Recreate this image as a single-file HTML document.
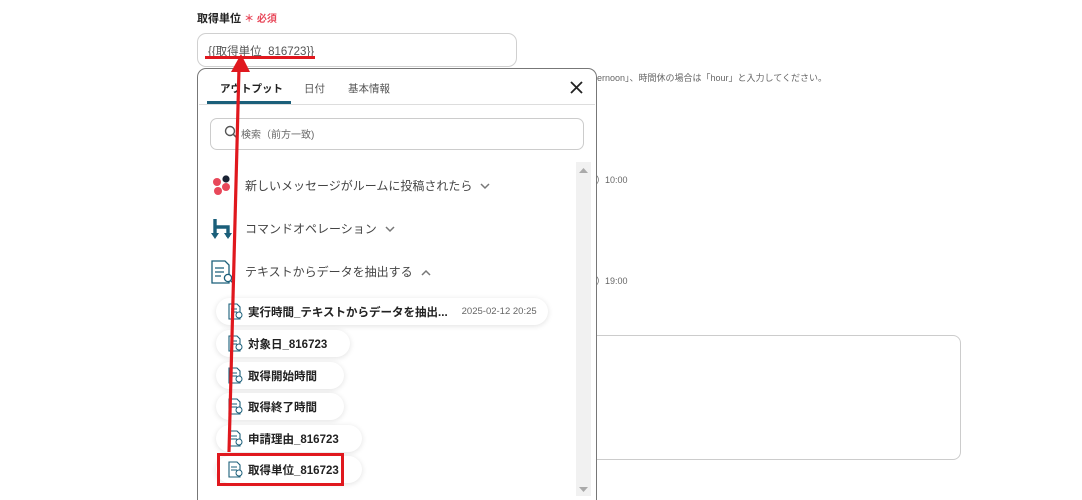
<!DOCTYPE html>
<html><head><meta charset="utf-8"><style>
*{margin:0;padding:0;box-sizing:border-box}
html,body{width:1082px;height:500px;overflow:hidden}
body{background:#fff;font-family:"Liberation Sans","Noto Sans CJK JP",sans-serif;position:relative;color:#333}
.a{position:absolute;white-space:nowrap}
.chip{position:absolute;left:216px;height:27px;background:#fff;border-radius:14px;box-shadow:0 1px 6px rgba(0,0,0,.12);font-size:11.5px;font-weight:bold;color:#222;display:flex;align-items:center;padding-left:12px}
.chip svg{margin-right:4px}
.chev{display:inline-block;margin-left:8px;vertical-align:middle}
</style></head><body>
<div class="a" style="left:197px;top:10px;font-size:11px;font-weight:bold;color:#222">取得単位 <span style="color:#e8485a;font-size:10px">＊ 必須</span></div>
<div class="a" style="left:197px;top:33px;width:320px;height:34px;border:1px solid #d0d0d0;border-radius:9px"></div>
<div class="a" style="left:208px;top:43px;font-size:11.5px;color:#555">{{取得単位_816723}}</div>
<div class="a" style="left:597px;top:71px;font-size:9px;color:#666">ernoon」、時間休の場合は「hour」と入力してください。</div>
<div class="a" style="left:596px;top:173px;font-size:9px;color:#666">）10:00</div>
<div class="a" style="left:596px;top:274px;font-size:9px;color:#666">）19:00</div>
<div class="a" style="left:585px;top:335px;width:376px;height:125px;border:1px solid #ccc;border-radius:8px"></div>

<div class="a" style="left:197px;top:68px;width:400px;height:432px;border:1.5px solid #777;border-bottom:none;border-radius:9px 9px 0 0;background:#fff"></div>
<div class="a" style="left:220px;top:81px;font-size:10.5px;font-weight:bold;color:#222">アウトプット</div>
<div class="a" style="left:304px;top:81px;font-size:10.5px;color:#555">日付</div>
<div class="a" style="left:348px;top:81px;font-size:10.5px;color:#555">基本情報</div>
<div class="a" style="left:207px;top:101px;width:84px;height:3px;background:#1b5f7a"></div>
<div class="a" style="left:199px;top:104px;width:396px;height:1px;background:#ddd"></div>
<svg class="a" style="left:570px;top:81px" width="13" height="13"><path d="M1 1L12 12M12 1L1 12" stroke="#222" stroke-width="1.8"/></svg>
<div class="a" style="left:210px;top:118px;width:374px;height:32px;border:1px solid #ccc;border-radius:7px"></div>
<svg class="a" style="left:224px;top:125px" width="14" height="14"><circle cx="6" cy="6" r="4.5" stroke="#555" stroke-width="1.4" fill="none"/><path d="M9.3 9.3L13 13" stroke="#555" stroke-width="1.5"/></svg>
<div class="a" style="left:241px;top:126px;font-size:10px;color:#666">検索（前方一致)</div>
<div class="a" style="left:576px;top:162px;width:15px;height:334px;background:#f1f1f1"></div>
<svg class="a" style="left:579px;top:168px" width="9" height="6"><path d="M0 5L4.5 0L9 5Z" fill="#aaa"/></svg>
<svg class="a" style="left:579px;top:487px" width="9" height="6"><path d="M0 0L4.5 5L9 0Z" fill="#aaa"/></svg>

<svg class="a" style="left:211px;top:174px" width="22" height="22"><circle cx="15" cy="5" r="3.6" fill="#1a2233"/><circle cx="6" cy="8" r="4" fill="#e8485a"/><circle cx="15" cy="13" r="4" fill="#e8485a"/><circle cx="7" cy="17" r="4" fill="#e8485a"/></svg>
<div class="a" style="left:245px;top:177px;font-size:12px;color:#444">新しいメッセージがルームに投稿されたら<svg class="chev" width="10" height="7"><path d="M1 1L5 5L9 1" stroke="#777" stroke-width="1.5" fill="none"/></svg></div>
<svg class="a" style="left:211px;top:217px" width="24" height="24"><path d="M4 2V18M4 10H17V20" stroke="#1b5f7a" stroke-width="3.4" fill="none"/><path d="M0 16H8L4 22Z M13 16H21L17 22Z" fill="#1b5f7a"/></svg>
<div class="a" style="left:245px;top:220px;font-size:12px;color:#444">コマンドオペレーション<svg class="chev" width="10" height="7"><path d="M1 1L5 5L9 1" stroke="#777" stroke-width="1.5" fill="none"/></svg></div>
<svg class="a" style="left:211px;top:260px" width="24" height="25"><path d="M1 1H14L18 5V23H1Z" stroke="#1b5f7a" stroke-width="1.3" fill="none"/><path d="M4 8H13M4 12H13M4 16H10" stroke="#1b5f7a" stroke-width="1.3"/><circle cx="17" cy="18" r="3.6" stroke="#1b5f7a" stroke-width="1.3" fill="#fff"/><path d="M19.5 20.5L23 24" stroke="#1b5f7a" stroke-width="1.4"/></svg>
<div class="a" style="left:245px;top:263px;font-size:12px;color:#444">テキストからデータを抽出する<svg class="chev" width="10" height="7"><path d="M1 6L5 2L9 6" stroke="#777" stroke-width="1.5" fill="none"/></svg></div>

<div class="chip" style="top:298px;width:332px"><svg width="16" height="17"><path d="M1 1H9L12 4V16H1Z" stroke="#1b5f7a" stroke-width="1.1" fill="none"/><path d="M3 6H9M3 9H9" stroke="#1b5f7a"/><circle cx="11" cy="12" r="3" stroke="#1b5f7a" fill="#fff"/></svg>実行時間_テキストからデータを抽出...<span style="font-weight:normal;color:#666;font-size:9.5px;margin-left:14px">2025-02-12 20:25</span></div>
<div class="chip" style="top:330px;width:134px"><svg width="16" height="17"><path d="M1 1H9L12 4V16H1Z" stroke="#1b5f7a" stroke-width="1.1" fill="none"/><path d="M3 6H9M3 9H9" stroke="#1b5f7a"/><circle cx="11" cy="12" r="3" stroke="#1b5f7a" fill="#fff"/></svg>対象日_816723</div>
<div class="chip" style="top:362px;width:128px"><svg width="16" height="17"><path d="M1 1H9L12 4V16H1Z" stroke="#1b5f7a" stroke-width="1.1" fill="none"/><path d="M3 6H9M3 9H9" stroke="#1b5f7a"/><circle cx="11" cy="12" r="3" stroke="#1b5f7a" fill="#fff"/></svg>取得開始時間</div>
<div class="chip" style="top:393px;width:128px"><svg width="16" height="17"><path d="M1 1H9L12 4V16H1Z" stroke="#1b5f7a" stroke-width="1.1" fill="none"/><path d="M3 6H9M3 9H9" stroke="#1b5f7a"/><circle cx="11" cy="12" r="3" stroke="#1b5f7a" fill="#fff"/></svg>取得終了時間</div>
<div class="chip" style="top:425px;width:146px"><svg width="16" height="17"><path d="M1 1H9L12 4V16H1Z" stroke="#1b5f7a" stroke-width="1.1" fill="none"/><path d="M3 6H9M3 9H9" stroke="#1b5f7a"/><circle cx="11" cy="12" r="3" stroke="#1b5f7a" fill="#fff"/></svg>申請理由_816723</div>
<div class="chip" style="top:456px;width:146px"><svg width="16" height="17"><path d="M1 1H9L12 4V16H1Z" stroke="#1b5f7a" stroke-width="1.1" fill="none"/><path d="M3 6H9M3 9H9" stroke="#1b5f7a"/><circle cx="11" cy="12" r="3" stroke="#1b5f7a" fill="#fff"/></svg>取得単位_816723</div>
<div class="a" style="left:217px;top:453px;width:127px;height:33px;border:3px solid #e0181e"></div>

<svg class="a" style="left:0;top:0" width="1082" height="500"><path d="M205 57.5H315" stroke="#e0181e" stroke-width="3"/><path d="M229 452L239 68" stroke="#e0181e" stroke-width="3.2"/><path d="M241 54L250 72H231Z" fill="#e0181e"/></svg>
</body></html>
